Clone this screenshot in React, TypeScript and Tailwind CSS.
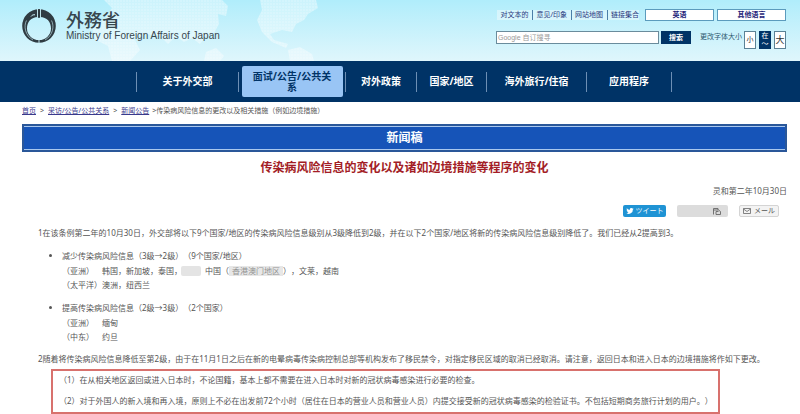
import React from "react";

const topLinks = ["对文本的", "意见/印象", "网站地图", "链接集合"];

function Emblem() {
  return (
    <svg viewBox="0 0 36 36" className="h-9 w-9 shrink-0" aria-hidden="true">
      <path fillRule="evenodd" fill="#2f3b42" d="M18 1.200A16.800 16.800 0 1 1 18 34.800A16.800 16.800 0 1 1 18 1.200zM17 9C10 9 6 14 6 20.500A12 11.500 0 0 0 30 20.500C30 14 26 9 19 9z" />
      <path d="M5.500 12.500C2.500 18 4 27.500 12 32M30.500 12.500C33.500 18 32 27.500 24 32" fill="none" stroke="#cdf3fa" strokeWidth="0.600" />
      <path d="M16.500 1v8M19.500 1v8M18 31v4" stroke="#cdf3fa" strokeWidth="0.900" />
      <path d="M10 8.500C11 7 12.500 6.500 14 6.800" fill="none" stroke="#cdf3fa" strokeWidth="1" />
      <path d="M18 1v9" stroke="#2f3b42" strokeWidth="1.600" />
    </svg>
  );
}

function WorldMap() {
  return (
    <svg viewBox="0 0 800 61" preserveAspectRatio="xMinYMin slice" className="absolute inset-0 h-full w-full" aria-hidden="true">
      <defs>
        <pattern id="dots" width="3" height="3" patternUnits="userSpaceOnUse">
          <rect width="3" height="3" fill="#ffffff" fillOpacity="0.350" />
          <rect width="2" height="2" fill="#ffffff" fillOpacity="0.150" />
        </pattern>
      </defs>
      <path fill="url(#dots)" d="M104 0H222L228 6L226 16L218 14L219 24L214 33L206 36L200 44L192 38L184 42L176 36L168 44L160 36L146 34L134 38L140 50L130 61H112L108 46L96 40L92 28L104 20L112 8zM206 52L216 48L224 56L220 61H204zM260 0H316L318 8L308 14L304 20L296 24L292 32L282 30L270 34L274 40L288 44L286 48L272 42L262 32L257 20L262 10zM288 50L300 47L312 54L314 61H290z" />
    </svg>
  );
}

function NavItem({ width, children }: { width: string; children: React.ReactNode }) {
  return (
    <li className={`flex h-5 items-center justify-center border-r border-[#6d8fb5] ${width}`}>
      <a href="#nav" className="whitespace-nowrap">{children}</a>
    </li>
  );
}

export default function App() {
  return (
    <div className="overflow-hidden bg-white font-['Noto_Sans','Noto_Sans_CJK_SC',sans-serif] text-[8px] leading-3 text-[#555] [text-spacing-trim:space-all]" lang="zh-CN">
      <header className="relative flex h-[61px] justify-between bg-linear-to-b from-[#b0edfb] to-[#dff6fc] pr-[14px] pl-[21px]">
        <WorldMap />
        <a href="#home" className="relative flex items-start gap-[9px] pt-2">
          <Emblem />
          <span className="flex flex-col pt-px text-[#37464e]">
            <span lang="ja" className="font-['Noto_Sans_CJK_JP',sans-serif] text-[18px] leading-[21px] font-medium">外務省</span>
            <span className="font-['Liberation_Sans',sans-serif] text-[10px] leading-3">Ministry of Foreign Affairs of Japan</span>
          </span>
        </a>
        <div className="relative flex flex-col items-end gap-[10px] pt-[9px]">
          <div className="flex items-center gap-[6px] text-[7px] leading-[10px] text-[#2b3a80]">
            <ul className="flex bg-white/40">
              {topLinks.map((t, i) => (
                <li key={t} className={i ? "border-l border-[#4b7fa8] pr-1 pl-[3px] last:pr-0" : "pr-1 pl-[3px]"}>
                  <a href="#top">{t}</a>
                </li>
              ))}
            </ul>
            <div className="flex gap-[3px]">
              <button className="h-[12px] w-[69px] border border-[#5b9bbd] bg-white font-bold text-[#1d1c78]">英语</button>
              <button className="h-[12px] w-[69px] border border-[#5b9bbd] bg-white font-bold text-[#1d1c78]">其他语言</button>
            </div>
          </div>
          <div className="flex items-start text-[7px] leading-[10px]">
            <input aria-label="搜索" placeholder="Google 自订搜寻" className="h-[13px] w-[163px] border border-[#6a8c9c] bg-white px-px font-['Liberation_Sans','Noto_Sans_CJK_SC',sans-serif] placeholder:text-[#999]" />
            <button className="ml-[2px] h-[13px] w-[30px] bg-[#003366] font-bold text-white">搜索</button>
            <span className="ml-[9px] pt-px text-[#2f5a70]">更改字体大小</span>
            <div className="ml-[2px] flex gap-[3px] text-[#333]">
              <button className="h-[18px] w-3 border border-[#5b8296] bg-white">小</button>
              <button className="flex h-[18px] w-3 flex-col items-center border border-[#003366] bg-[#003366] leading-2 text-white">
                <span>在</span>
                <span>～</span>
              </button>
              <button className="h-[18px] w-3 border border-[#5b8296] bg-white text-[9px]">大</button>
            </div>
          </div>
        </div>
      </header>

      <nav className="bg-[#003366] py-[5px] pl-[136px] text-[10px] leading-[11px] font-bold text-white">
        <ul className="flex h-[31px] items-center">
          <li className="h-5 border-l border-[#6d8fb5]" />
          <NavItem width="w-[102px]">关于外交部</NavItem>
          <li className="flex h-[31px] w-[106px] items-stretch justify-center">
            <a href="#press" aria-current="page" className="flex w-[101px] items-center justify-center rounded-xs bg-[#99c5f5] px-2 text-center text-[#003366]">面试/公告/公共关系</a>
          </li>
          <li className="h-5 border-l border-[#6d8fb5]" />
          <NavItem width="w-[71px]">对外政策</NavItem>
          <NavItem width="w-[70px]">国家/地区</NavItem>
          <NavItem width="w-[100px]">海外旅行/住宿</NavItem>
          <NavItem width="w-[85px]">应用程序</NavItem>
        </ul>
      </nav>

      <main className="pr-[13px] pb-px pl-[22px]">
        <div className="pt-[3px] text-[7px] leading-3">
          <a href="#home" className="text-[#3a3a8c] underline">首页</a>
          <span className="px-1">&gt;</span>
          <a href="#press" className="text-[#3a3a8c] underline">采访/公告/公共关系</a>
          <span className="px-1">&gt;</span>
          <a href="#news" className="text-[#3a3a8c] underline">新闻公告</a>
          <span className="pl-[3px]">&gt;传染病风险信息的更改以及相关措施（例如边境措施）</span>
        </div>

        <div className="mt-[7px] border-2 border-[#2a5799] bg-[#1654b8] text-center">
          <h1 className="border-y border-[#a9c8ee] text-[12px] leading-[22px] font-bold text-white">新闻稿</h1>
        </div>
        <h2 className="mt-2 text-center text-[12px] leading-4 font-bold text-[#a31d26]">传染病风险信息的变化以及诸如边境措施等程序的变化</h2>
        <p className="mt-[9px] text-right">灵和第二年10月30日</p>

        <div className="mt-2 flex justify-end gap-[11px] pr-2 text-[7px] leading-3">
          <button className="flex h-3 w-[43px] items-center justify-center gap-[2px] rounded-xs bg-[#1f93d4] text-white">
            <svg viewBox="0 0 24 24" className="h-2 w-2" fill="currentColor" aria-hidden="true">
              <path d="M23 5a9 9 0 0 1-2.600.7 4.500 4.500 0 0 0 2-2.500 9 9 0 0 1-2.900 1.100 4.500 4.500 0 0 0-7.700 4.100A12.800 12.800 0 0 1 2.500 3.700a4.500 4.500 0 0 0 1.400 6 4.500 4.500 0 0 1-2-.6 4.500 4.500 0 0 0 3.600 4.500 4.500 4.500 0 0 1-2 .1 4.500 4.500 0 0 0 4.200 3.100A9 9 0 0 1 1 18.700 12.800 12.800 0 0 0 20.700 7.300 9 9 0 0 0 23 5z" />
            </svg>
            ツイート
          </button>
          <button aria-label="分享" className="flex h-3 w-[51px] items-center justify-end rounded-xs bg-[#dcdcdc] pr-[7px] text-[#666]">
            <svg viewBox="0 0 8 8" className="h-2 w-2" fill="none" stroke="currentColor" strokeWidth="0.900" aria-hidden="true">
              <path d="M.5 7.500V1.500h4.500v1.500M.5 3h5l2 1.500v3H3V4.500h2.500" />
            </svg>
          </button>
          <button className="flex h-3 w-[40px] items-center justify-center gap-[3px] rounded-xs border border-[#d4d4d4] bg-[#f3f3f3]">
            <svg viewBox="0 0 8 6" className="h-[6px] w-2" fill="none" stroke="#666" strokeWidth="0.800" aria-hidden="true">
              <path d="M.5.5h7v5h-7zM.5 1L4 3.500 7.500 1" />
            </svg>
            メール
          </button>
        </div>

        <div className="pl-4">
          <p className="mt-[10px]">1在该条例第二年的10月30日，外交部将以下9个国家/地区的传染病风险信息级别从3级降低到2级，并在以下2个国家/地区将新的传染病风险信息级别降低了。我们已经从2提高到3。</p>
          <ul className="mt-[10px] list-disc pl-6 leading-[14px]">
            <li>
              减少传染病风险信息（3级→2级）（9个国家/地区）
              <div className="mt-px flex">
                <span className="w-10">（亚洲）</span>
                <span>韩国，新加坡，泰国，</span>
                <span className="my-[2px] mr-1 -ml-px w-5 rounded-xs bg-[#e4e4e4]" />
                <span>中国（</span>
                <span className="relative px-[3px] text-[#555]">
                  <span className="absolute inset-x-0 inset-y-[2px] bg-[#d0d0d0]/50" />
                  香港澳门地区
                </span>
                <span>），文莱，越南</span>
              </div>
              <div className="flex">
                <span className="w-10 whitespace-nowrap">（太平洋）</span>
                <span>澳洲，纽西兰</span>
              </div>
            </li>
            <li className="mt-[9px]">
              提高传染病风险信息（2级→3级）（2个国家）
              <div className="mt-px flex">
                <span className="w-10">（亚洲）</span>
                <span>缅甸</span>
              </div>
              <div className="flex">
                <span className="w-10">（中东）</span>
                <span>约旦</span>
              </div>
            </li>
          </ul>
          <p className="mt-[9px]">2随着将传染病风险信息降低至第2级，由于在11月1日之后在新的电晕病毒传染病控制总部等机构发布了移民禁令，对指定移民区域的取消已经取消。请注意，返回日本和进入日本的边境措施将作如下更改。</p>
          <div className="mt-1 mr-[67px] ml-[13px] border-2 border-[#d8716d] pt-[3px] pb-[5px] pl-[6px]">
            <p>（1）在从相关地区返回或进入日本时，不论国籍，基本上都不需要在进入日本时对新的冠状病毒感染进行必要的检查。</p>
            <p className="mt-[9px]">（2）对于外国人的新入境和再入境，原则上不必在出发前72个小时（居住在日本的营业人员和营业人员）内提交接受新的冠状病毒感染的检验证书。不包括短期商务旅行计划的用户。）</p>
          </div>
        </div>
      </main>
    </div>
  );
}
